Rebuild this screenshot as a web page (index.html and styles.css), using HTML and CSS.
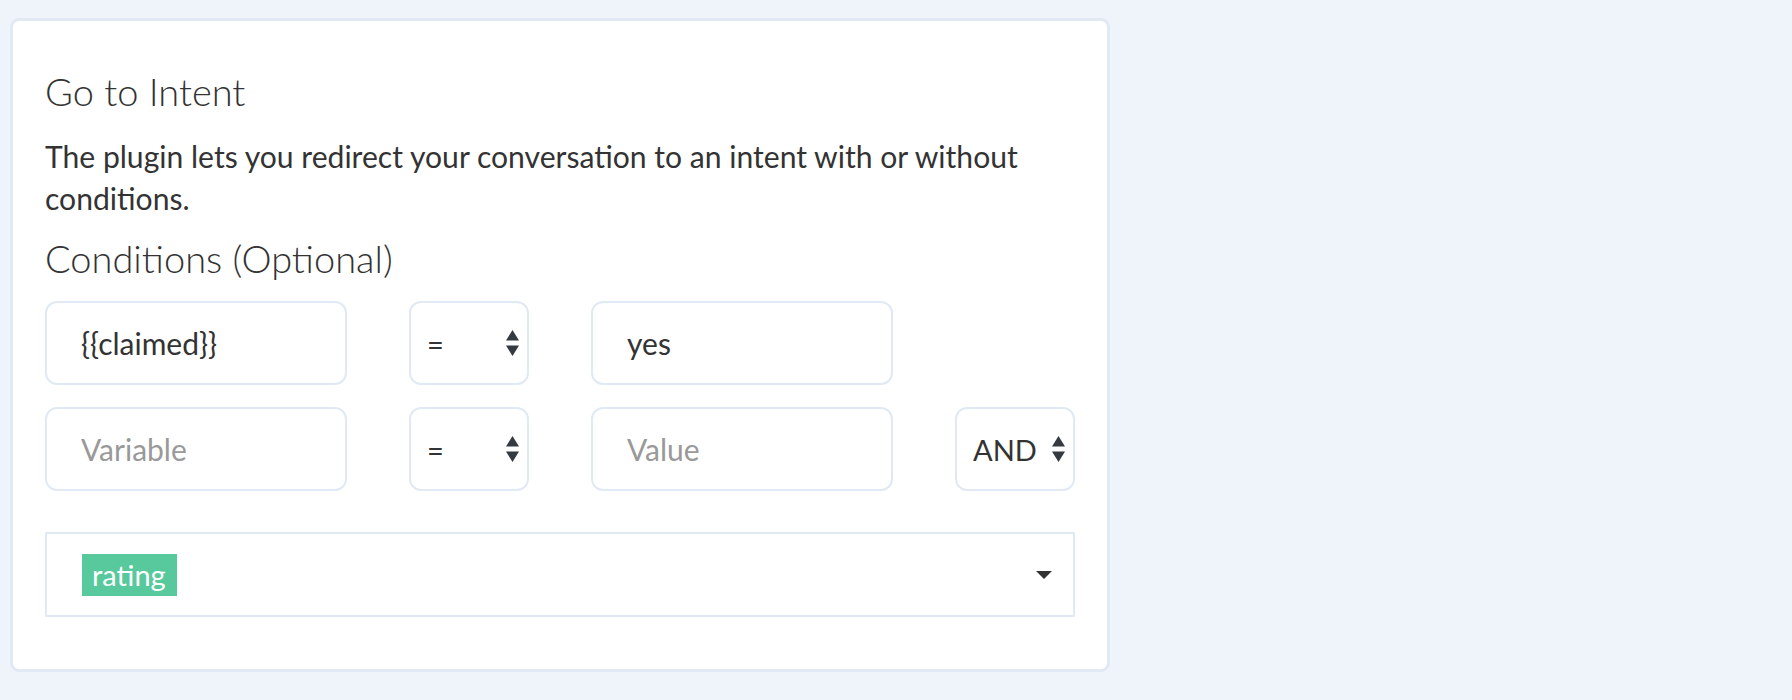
FILE: index.html
```html
<!DOCTYPE html>
<html lang="en">
<head>
<meta charset="utf-8">
<title>Go to Intent</title>
<link rel="stylesheet" href="styles.css">
</head>
<body>
<div class="card">
  <h2 class="title">Go to Intent</h2>
  <p class="desc">The plugin lets you redirect your conversation to an intent with or without conditions.</p>
  <h3 class="sub">Conditions (Optional)</h3>
  <div class="rows">
    <input class="field" type="text" value="{{claimed}}" placeholder="Variable">
    <div class="select">
      <span class="sel-text">=</span>
      <svg class="updown" width="13" height="26" viewBox="0 0 4 5" preserveAspectRatio="none"><path fill="#343a40" d="M2 0L0 2h4zm0 5L0 3h4z"/></svg>
    </div>
    <input class="field" type="text" value="yes" placeholder="Value">
    <div class="empty"></div>

    <input class="field" type="text" placeholder="Variable">
    <div class="select">
      <span class="sel-text">=</span>
      <svg class="updown" width="13" height="26" viewBox="0 0 4 5" preserveAspectRatio="none"><path fill="#343a40" d="M2 0L0 2h4zm0 5L0 3h4z"/></svg>
    </div>
    <input class="field" type="text" placeholder="Value">
    <div class="select">
      <span class="sel-text">AND</span>
      <svg class="updown" width="13" height="26" viewBox="0 0 4 5" preserveAspectRatio="none"><path fill="#343a40" d="M2 0L0 2h4zm0 5L0 3h4z"/></svg>
    </div>
  </div>
  <div class="tagbox">
    <span class="tag">rating</span>
    <span class="caret"></span>
  </div>
</div>
</body>
</html>
```
FILE: styles.css
```css
html, body {
  margin: 0;
  background: #eff3fa;
}
body {
  padding: 18px 0 0 10px;
  font-family: "Lato", "Open Sans", sans-serif;
  color: #333;
}
.card {
  box-sizing: border-box;
  width: 1100px;
  background: #fff;
  border: 3px solid #e1e9f4;
  border-radius: 9px;
  padding: 47px 32px 52px;
}
.title {
  margin: 0 0 20px;
  font-size: 38px;
  line-height: 47px;
  font-weight: 300;
  color: #333;
}
.desc {
  margin: 0 0 16px;
  font-size: 30.1px;
  line-height: 42px;
  font-weight: 400;
  color: #333;
}
.sub {
  margin: 0 0 19px;
  font-size: 38px;
  line-height: 47px;
  font-weight: 300;
  color: #333;
}
.rows {
  display: grid;
  grid-template-columns: 1fr 120px 1fr 120px;
  column-gap: 62px;
  row-gap: 22px;
}
.field {
  box-sizing: border-box;
  height: 84px;
  width: 100%;
  border: 2px solid #e1e9f5;
  border-radius: 12px;
  padding: 0 20px 0 34px;
  font-family: "Lato", sans-serif;
  font-size: 30px;
  color: #333;
  background: #fff;
  outline: none;
}
.field::placeholder {
  color: #999;
  opacity: 1;
}
.select {
  box-sizing: border-box;
  height: 84px;
  border: 2px solid #e1e9f5;
  border-radius: 12px;
  display: flex;
  align-items: center;
  justify-content: space-between;
  padding: 0 8px 0 16px;
  background: #fff;
}
.sel-text {
  font-size: 29px;
  color: #333;
}
.updown {
  display: block;
  flex: none;
}
.tagbox {
  box-sizing: border-box;
  margin-top: 41px;
  height: 85px;
  border: 2px solid #e1e9f4;
  display: flex;
  align-items: center;
  justify-content: space-between;
  padding: 0 21px 0 35px;
}
.tag {
  background: #57c99d;
  color: #fff;
  font-size: 29px;
  line-height: 42px;
  padding: 0 11px 0 10px;
}
.caret {
  width: 0;
  height: 0;
  border-style: solid;
  border-width: 8px 8px 0 8px;
  border-color: #333 transparent transparent transparent;
}
```
